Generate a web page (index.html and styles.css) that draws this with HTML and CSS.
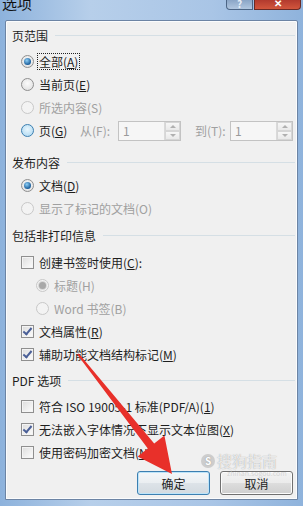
FILE: index.html
```html
<!DOCTYPE html>
<html>
<head>
    <meta charset="utf-8">
    <title>选项</title>
    <link rel="stylesheet" href="styles.css">
</head>
<body>
    <div class="window">
        <div class="titlebar">
            <span class="title">选项</span>
            <div class="caption-buttons">
                <span class="cap help">?</span>
                <span class="cap close">✕</span>
            </div>
        </div>

        <div class="client">
            <!-- 页范围 -->
            <div class="group-title first">页范围</div>
            <div class="opts">
                <div class="row"><span class="radio checked"></span><span class="label focus">全部(<u>A</u>)</span></div>
                <div class="row"><span class="radio"></span><span class="label">当前页(<u>E</u>)</span></div>
                <div class="row"><span class="radio disabled"></span><span class="label dim">所选内容(S)</span></div>
                <div class="row">
                    <span class="radio hover"></span><span class="label page-label">页(<u>G</u>)</span>
                    <span class="field-label from dim">从(F):</span>
                    <span class="spin"><span class="spin-value">1</span><span class="spin-buttons"><span class="up"></span><span class="down"></span></span></span>
                    <span class="field-label to dim">到(T):</span>
                    <span class="spin"><span class="spin-value">1</span><span class="spin-buttons"><span class="up"></span><span class="down"></span></span></span>
                </div>
            </div>

            <!-- 发布内容 -->
            <div class="group-title second">发布内容</div>
            <div class="opts tight">
                <div class="row"><span class="radio checked"></span><span class="label">文档(<u>D</u>)</span></div>
                <div class="row"><span class="radio disabled"></span><span class="label dim">显示了标记的文档(O)</span></div>
            </div>

            <!-- 包括非打印信息 -->
            <div class="group-title">包括非打印信息</div>
            <div class="opts loose">
                <div class="row"><span class="check"></span><span class="label">创建书签时使用(<u>C</u>):</span></div>
                <div class="row nested"><span class="radio checked disabled"></span><span class="label dim">标题(H)</span></div>
                <div class="row nested"><span class="radio disabled"></span><span class="label dim">Word 书签(B)</span></div>
                <div class="row"><span class="check checked"></span><span class="label">文档属性(<u>R</u>)</span></div>
                <div class="row"><span class="check checked"></span><span class="label">辅助功能文档结构标记(<u>M</u>)</span></div>
            </div>

            <!-- PDF 选项 -->
            <div class="group-title pdf">PDF 选项</div>
            <div class="opts">
                <div class="row"><span class="check"></span><span class="label">符合 ISO 19005-1 标准(PDF/A)(<u>1</u>)</span></div>
                <div class="row"><span class="check checked"></span><span class="label">无法嵌入字体情况下显示文本位图(<u>X</u>)</span></div>
                <div class="row"><span class="check"></span><span class="label">使用密码加密文档(<u>N</u>)</span></div>
            </div>

            <div class="buttons">
                <button class="btn default">确定</button>
                <button class="btn">取消</button>
            </div>
        </div>

        <!-- watermark -->
        <div class="watermark">
            <span class="wm-logo">S</span><span class="wm-text">搜狗指南</span>
            <div class="wm-url">zhinan.sogou.com</div>
        </div>

        <!-- red arrow drawn over the dialog -->
        <svg class="arrow" width="303" height="506" viewBox="0 0 303 506">
            <polygon points="78.8,353.4 154.2,443.6 164.4,435.6 172,474 137.6,456.4 147.8,448.4 77.2,354.6" fill="#e8302a"/>
        </svg>
    </div>
</body>
</html>
```

FILE: styles.css
```css
* {
    box-sizing: border-box;
}
body {
    margin: 0;
    font-family: "Noto Sans CJK SC", "Microsoft YaHei", sans-serif;
    font-size: 12px;
    color: #1e1e1e;
    background: #9dbde2;
}
.window {
    position: relative;
    width: 303px;
    height: 506px;
    padding: 0 5px 6px 5px;
    background: linear-gradient(90deg, #8db2dc 0%, #b7cfea 30%, #a9c5e6 70%, #8fb3dc 100%);
    display: flex;
    flex-direction: column;
    overflow: hidden;
}
.titlebar {
    height: 20px;
    display: flex;
    justify-content: space-between;
    align-items: flex-start;
}
.title {
    margin-top: -6px;
    margin-left: -3px;
    font-size: 15px;
    line-height: 18px;
    color: #111;
}
.caption-buttons {
    display: flex;
    gap: 1px;
    margin-right: -3px;
}
.cap {
    height: 10px;
    display: flex;
    align-items: flex-end;
    justify-content: center;
    font-size: 10px;
    line-height: 10px;
    color: #fff;
    font-weight: bold;
    border: 1px solid #4c6585;
    border-top: none;
    overflow: hidden;
}
.help {
    width: 27px;
    background: linear-gradient(#8aa5c6, #b1c7e0);
    border-radius: 0 0 0 4px;
    color: #e8eef6;
}
.close {
    width: 47px;
    background: linear-gradient(#b23a2e, #d2563d);
    border-color: #6a2a25;
    border-radius: 0 0 4px 0;
    padding-bottom: 1px;
}
.client {
    flex: 1;
    background: #f0f0f0;
    border: 1px solid #6c84a4;
    border-radius: 2px 2px 0 0;
    box-shadow: inset 0 0 0 1px #fbfcfd;
    padding: 0 2px 0 6px;
    display: flex;
    flex-direction: column;
}
.group-title {
    height: 16px;
    display: flex;
    align-items: center;
    margin-top: 7px;
    white-space: nowrap;
}
.group-title::after {
    content: "";
    flex: 1;
    height: 1px;
    margin-left: 7px;
    background: #d5dfe5;
}
.group-title.first { margin-top: 6px; }
.group-title.second { margin-top: 12px; }
.group-title.pdf { margin-top: 6px; }
.opts {
    margin-top: 7px;
}
.opts.tight { margin-top: 4px; }
.opts.loose { margin-top: 8px; }
.row {
    height: 23px;
    display: flex;
    align-items: center;
    padding-left: 9px;
    white-space: nowrap;
}
.row.nested {
    padding-left: 24px;
}
.label {
    margin-left: 4px;
    line-height: 15px;
    padding: 0 1px;
}
.label u {
    text-decoration-thickness: 1px;
    text-underline-offset: 1px;
}
.label.focus {
    outline: 1px dotted #222;
    outline-offset: 0;
}
.dim {
    color: #a0a0a0;
}
.radio {
    width: 13px;
    height: 13px;
    flex: none;
    border-radius: 50%;
    border: 1px solid #8f8f8f;
    background: radial-gradient(circle at 50% 40%, #fbfbfb, #dcdcdc);
    display: flex;
    align-items: center;
    justify-content: center;
}
.radio.checked::after {
    content: "";
    width: 7px;
    height: 7px;
    border-radius: 50%;
    background: radial-gradient(circle at 40% 35%, #8fd0f7, #1a5d9a 70%);
}
.radio.disabled {
    border-color: #c8c8c8;
    background: #f3f3f3;
}
.radio.checked.disabled::after {
    background: #a8a8a8;
    box-shadow: 0 0 0 1px #d8d8d8;
}
.radio.hover {
    border-color: #3c7fb1;
    background: radial-gradient(circle at 50% 40%, #e8f6fd, #a8d5f0);
}
.check {
    width: 13px;
    height: 13px;
    flex: none;
    border: 1px solid #8f8f8f;
    background: linear-gradient(135deg, #dcdcdc, #fdfdfd);
    box-shadow: inset 0 0 0 1px #f4f4f4;
    position: relative;
}
.check.checked::after {
    content: "";
    position: absolute;
    left: 3px;
    top: 0px;
    width: 3px;
    height: 7px;
    border: solid #4a5f97;
    border-width: 0 2px 2px 0;
    transform: rotate(40deg);
}
.page-label {
    width: 28px;
}
.field-label {
    margin-left: 14px;
}
.field-label.from { width: 38px; }
.field-label.to { width: 35px; }
.spin {
    width: 63px;
    height: 20px;
    border: 1px solid #c3c3c3;
    background: #f6f6f6;
    display: flex;
    align-items: center;
}
.spin-value {
    flex: 1;
    padding-left: 4px;
    color: #9a9a9a;
}
.spin-buttons {
    width: 16px;
    height: 18px;
    display: flex;
    flex-direction: column;
    border-left: 1px solid #dadada;
    margin-right: 0;
}
.spin-buttons span {
    flex: 1;
    display: flex;
    align-items: center;
    justify-content: center;
    background: linear-gradient(#f7f7f7, #e9e9e9);
    border: 1px solid #d6d6d6;
}
.spin-buttons .up::after {
    content: "";
    border: 3px solid transparent;
    border-bottom-color: #b0b0b0;
    border-top: none;
}
.spin-buttons .down::after {
    content: "";
    border: 3px solid transparent;
    border-top-color: #b0b0b0;
    border-bottom: none;
}
.buttons {
    margin-top: 7px;
    display: flex;
    justify-content: flex-end;
    gap: 10px;
    padding-right: 2px;
}
.btn {
    width: 73px;
    height: 24px;
    font-family: inherit;
    font-size: 12px;
    color: #1e1e1e;
    border: 1px solid #707070;
    border-radius: 3px;
    background: linear-gradient(#f2f2f2 0%, #ebebeb 50%, #dddddd 51%, #cfcfcf 100%);
    box-shadow: inset 0 0 0 1px #fcfcfc;
    padding: 0;
}
.btn.default {
    border-color: #3c7fb1;
    box-shadow: inset 0 0 0 1px #bde4f9;
    background: linear-gradient(#f4f7f9 0%, #eaeef1 50%, #dde3e8 51%, #d3dae0 100%);
}
.watermark {
    position: absolute;
    left: 201px;
    top: 450px;
    color: rgba(255, 255, 255, 0.75);
    text-shadow: 0 0 1px rgba(90, 90, 90, 0.6);
    pointer-events: none;
}
.wm-logo {
    display: inline-flex;
    width: 14px;
    height: 14px;
    border-radius: 50%;
    align-items: center;
    justify-content: center;
    font-size: 10px;
    font-weight: bold;
    background: rgba(170, 170, 170, 0.5);
    color: #fff;
    vertical-align: middle;
    margin-right: 2px;
}
.wm-text {
    font-size: 15px;
    vertical-align: middle;
}
.wm-url {
    font-size: 7px;
    margin-left: 26px;
    margin-top: -3px;
    color: rgba(200, 200, 200, 0.7);
    text-shadow: none;
}
.arrow {
    position: absolute;
    left: 0;
    top: 0;
    pointer-events: none;
}
```
